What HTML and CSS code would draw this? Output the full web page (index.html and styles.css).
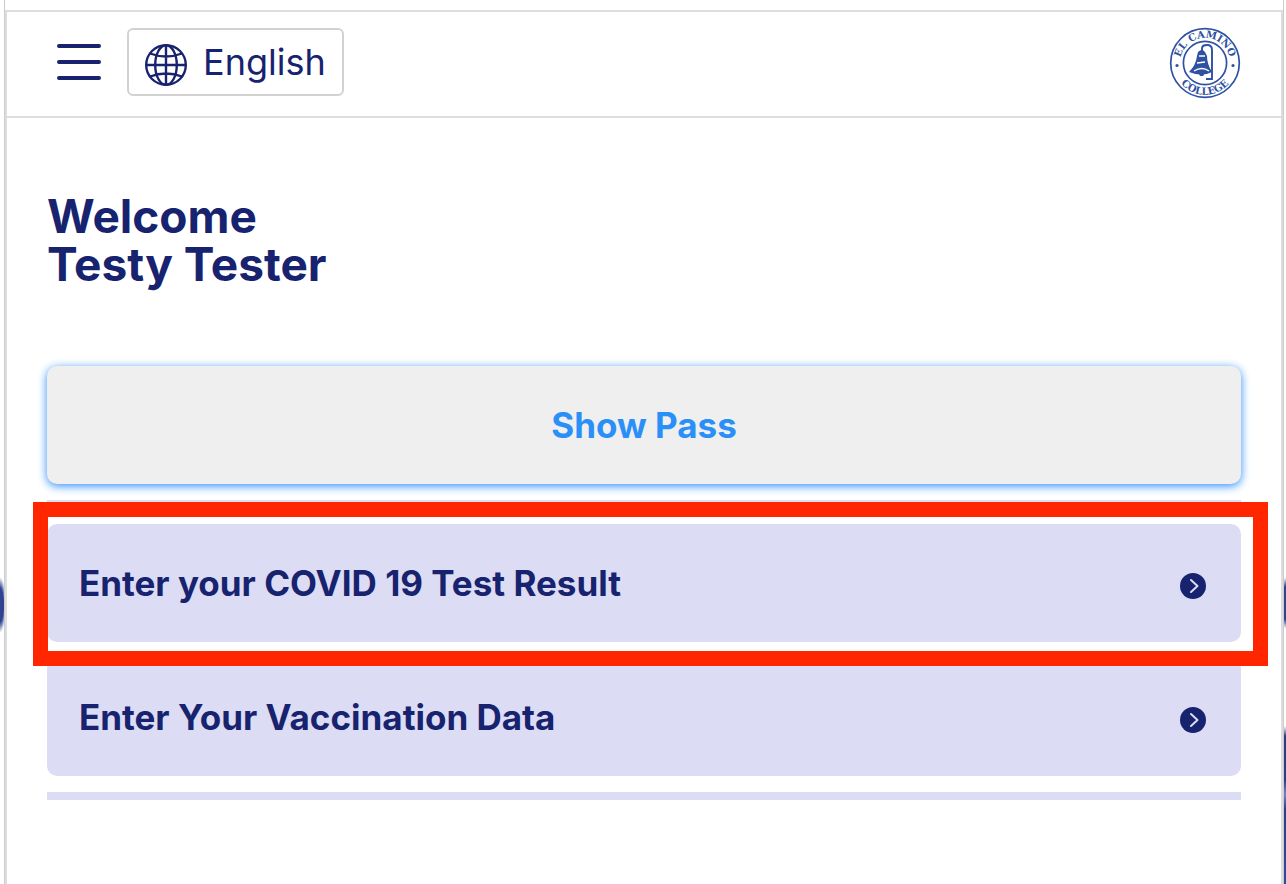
FILE: index.html
```html
<!DOCTYPE html>
<html lang="en">
<head>
<meta charset="utf-8">
<meta name="viewport" content="width=device-width, initial-scale=1">
<title>Welcome</title>
<link rel="stylesheet" href="styles.css">
</head>
<body>
<div class="shell">
  <div class="app">
    <header class="topbar">
      <div class="topbar-left">
        <button class="menu" type="button" aria-label="Menu">
          <svg width="44" height="36" viewBox="0 0 44 36" fill="none" stroke="currentColor" stroke-width="4" stroke-linecap="round"><path d="M2 2H42M2 18H42M2 34H42"/></svg>
        </button>
        <button class="language" type="button">
          <svg class="globe" width="42" height="42" viewBox="0 0 42 42" fill="none" stroke="currentColor" stroke-width="2.4"><circle cx="21" cy="21" r="19.8"/><ellipse cx="21" cy="21" rx="10.8" ry="19.8"/><path d="M21 1V41M1 21H41M5 9.500Q21 15.500 37 9.500M5 32.500Q21 26.500 37 32.500"/></svg>
          <span>English</span>
        </button>
      </div>
      <svg class="seal" width="72" height="72" viewBox="0 0 72 72" role="img" aria-label="El Camino College">
        <defs>
          <path id="arc-top" d="M11.400 40.340A25 25 0 1 1 60.600 40.340"/>
          <path id="arc-bottom" d="M4.300 36A31.700 31.700 0 0 0 67.700 36"/>
        </defs>
        <g fill="none" stroke="currentColor">
          <circle cx="36" cy="36" r="34.300" stroke-width="1.700"/>
          <circle cx="36" cy="36" r="21.600" stroke-width="1.700"/>
          <path stroke-width="1.900" d="M33 24V21.500Q33 18 38 18Q43 18 43 23V52H37"/>
        </g>
        <g fill="currentColor">
          <path d="M29 25Q33 21 36 25L38 29Q38 37 43 45Q33 50 20 45Q27 38 28 29Z"/>
          <path d="M29 45L37 45L34 49H31Z"/>
          <circle cx="8" cy="38.500" r="1.600"/>
          <circle cx="64" cy="38.500" r="1.600"/>
        </g>
        <path d="M30 29H36M28 36L36 35M25 44Q33 39 40 44" fill="none" stroke="#fff" stroke-width="1.300"/>
        <g class="seal-text">
          <text><textPath href="#arc-top" startOffset="50%" text-anchor="middle">EL CAMINO</textPath></text>
          <text><textPath href="#arc-bottom" startOffset="50%" text-anchor="middle">COLLEGE</textPath></text>
        </g>
      </svg>
    </header>
    <main class="content">
      <h1 class="welcome">Welcome<br>Testy Tester</h1>
      <button class="pass" type="button">Show Pass</button>
      <nav class="actions">
        <div class="highlighted">
          <a class="action" href="#test">Enter your COVID 19 Test Result
            <svg class="chevron" width="26" height="26" viewBox="0 0 26 26" fill="none"><circle cx="13" cy="13" r="13" fill="currentColor"/><path d="M11 7L17.500 13L11 19" stroke="#dcddf4" stroke-width="2" stroke-linecap="round" stroke-linejoin="round"/></svg>
          </a>
        </div>
        <a class="action" href="#vaccination">Enter Your Vaccination Data
          <svg class="chevron" width="26" height="26" viewBox="0 0 26 26" fill="none"><circle cx="13" cy="13" r="13" fill="currentColor"/><path d="M11 7L17.500 13L11 19" stroke="#dcddf4" stroke-width="2" stroke-linecap="round" stroke-linejoin="round"/></svg>
        </a>
      </nav>
    </main>
  </div>
</div>
</body>
</html>
```
FILE: styles.css
```css
* { box-sizing: border-box; }

body {
  margin: 0;
  color: #18236f;
  font-family: Inter, "Liberation Sans", sans-serif;
  background:
    radial-gradient(ellipse 6px 28px at 0 605px, #2f4390 60%, transparent) no-repeat,
    radial-gradient(ellipse 6px 26px at 100% 603px, #2f4390 65%, transparent) no-repeat,
    linear-gradient(transparent 726px, #2c3b80 736px, #24408e 780px, #7a7fd0 794px, #24408e 810px, #2c4da0) right top / 2px 100% no-repeat,
    #fff;
}

button { font: inherit; color: inherit; cursor: pointer; }

.shell {
  min-height: 100vh;
  margin: 0 2px 0 4px;
  padding-top: 10px;
  border: solid #ccc;
  border-width: 0 1px;
  background: #fff;
}

.app {
  min-height: calc(100vh - 10px);
  border: 2px solid #ddd;
  border-bottom: 0;
}

.topbar {
  display: flex;
  align-items: center;
  justify-content: space-between;
  padding: 16px 40px 20px 50px;
  border-bottom: 2px solid #ddd;
}

.topbar-left { display: flex; align-items: center; gap: 26px; }

.menu {
  display: flex;
  padding: 0;
  border: 0;
  background: none;
}

.language {
  display: flex;
  align-items: center;
  gap: 16px;
  height: 68px;
  padding: 0 16px;
  border: 2px solid #d2d2d2;
  border-radius: 6px;
  background: #fff;
  font-size: 36px;
  line-height: 44px;
}

.globe { margin-top: 6px; }

.seal { color: #2f51a3; margin: -1px 0 -3px; }

.seal-text {
  fill: currentColor;
  font: bold 10px "DejaVu Serif", serif;
}

.content { padding: 74px 40px 40px; }

.welcome {
  margin: 0 0 78px;
  font-size: 46px;
  font-weight: 700;
  line-height: 48px;
}

.pass {
  display: block;
  width: 100%;
  height: 118px;
  border: 0;
  border-radius: 10px;
  background: #efefef;
  box-shadow: 0 2px 10px #2a8cff;
  color: #2a8ff7;
  font-size: 35px;
  font-weight: 700;
}

.actions {
  display: grid;
  gap: 16px;
  margin-top: 16px;
  padding: 16px 0;
  border: solid #dcddf4;
  border-width: 8px 0;
}

.action {
  display: flex;
  align-items: center;
  justify-content: space-between;
  height: 118px;
  padding: 0 35px 0 32px;
  border-radius: 10px;
  background: #dcddf4;
  color: inherit;
  font-size: 35px;
  font-weight: 700;
  text-decoration: none;
}

.chevron { flex: none; margin-top: 6px; }

.highlighted { position: relative; }

.highlighted::after {
  content: "";
  position: absolute;
  inset: -22px -27px -24px -14px;
  border: 15px solid #ff2600;
  pointer-events: none;
}
```
